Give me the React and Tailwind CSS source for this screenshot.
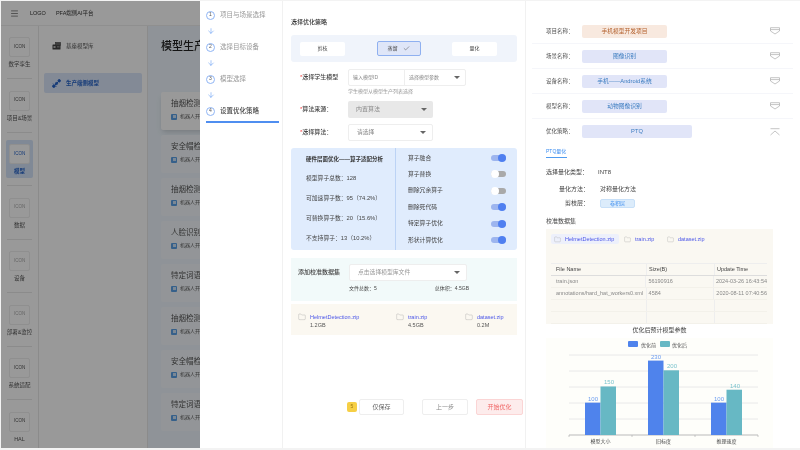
import { ArrowDown, Check, Folder, Menu } from "lucide-react";

const sideItems = [
  { label: "数字孪生" },
  { label: "项目&场景" },
  { label: "模型", active: true },
  { label: "数据", dim: true },
  { label: "设备", dim: true },
  { label: "部署&监控", dim: true },
  { label: "系统适配" },
  { label: "HAL" },
];

const cards = ["抽烟检测", "安全帽检", "抽烟检测", "人脸识别", "特定词语", "抽烟检测", "安全帽检", "特定词语"];
const steps = ["项目与场景选择", "选择目标设备", "模型选择", "设置优化策略"];
const toggles = [
  { label: "算子融合", on: true },
  { label: "算子替换", on: false },
  { label: "删除冗余算子", on: false },
  { label: "删除死代码", on: true },
  { label: "特定算子优化", on: true },
  { label: "形状计算优化", on: true },
];
const stats = ["模型算子总数：128", "可加速算子数：95（74.2%）", "可替换算子数：20（15.6%）", "不支持算子：13（10.2%）"];
const files = [
  { name: "HelmetDetection.zip", size: "1.2GB", cls: "w-[98px]" },
  { name: "train.zip", size: "4.5GB", cls: "w-[69px]" },
  { name: "dataset.zip", size: "0.2M", cls: "w-[50px]" },
];
const summary = [
  { label: "项目名称：", value: "手机模型开发项目", cls: "w-[85px] bg-[#f8e9df] text-[#b4622f]" },
  { label: "场景名称：", value: "图像识别", cls: "w-[85px] bg-[#e1e5f8] text-[#3b7cc0]" },
  { label: "设备名称：", value: "手机——Android系统", cls: "w-[85px] bg-[#e1e5f8] text-[#3b7cc0]" },
  { label: "模型名称：", value: "动物图像识别", cls: "w-[85px] bg-[#e1e5f8] text-[#3b7cc0]" },
  { label: "优化策略：", value: "PTQ", cls: "w-[110px] bg-[#e1e5f8] text-[#3b7cc0]", open: true },
];
const tableRows = [
  ["train.json", "56190916", "2024-03-26 16:43:54"],
  ["annotations/hard_hat_workers0.xml", "4584", "2020-08-11 07:40:56"],
  ["", "", ""],
  ["", "", ""],
];

function Toggle({ on }) {
  return (
    <div className={`relative w-[15px] h-[6px] rounded-full ${on ? "bg-[#9db5ef]" : "bg-[#a9a9a9]"}`}>
      <div className={`absolute top-[-1px] w-[8px] h-[8px] rounded-full ${on ? "right-0 bg-[#4f7ff0]" : "left-0 bg-white"}`} />
    </div>
  );
}

function FoldIcon({ open }) {
  return (
    <svg width="10" height="8" viewBox="0 0 10 8" fill="none" stroke="#b5b5b5" strokeWidth="0.8">
      {open ? (
        <>
          <path d="M0.5 0.7H9.5" />
          <path d="M0.5 7L5 3L9.5 7" />
        </>
      ) : (
        <>
          <path d="M0.5 0.7H9.5V4L5 7L0.5 4Z" />
          <path d="M0.5 2.6H9.5" />
        </>
      )}
    </svg>
  );
}

function LibraryIcon() {
  return (
    <svg width="9" height="8" viewBox="0 0 9 8" className="shrink-0">
      <rect x="0.5" y="2.5" width="8" height="5" rx="0.5" fill="#444" />
      <rect x="3.5" y="0.5" width="5" height="3" fill="#666" stroke="#444" strokeWidth="0.6" />
      <rect x="1.5" y="4" width="2" height="2" fill="#bbb" />
      <rect x="5" y="4.5" width="2.5" height="0.8" fill="#bbb" />
    </svg>
  );
}

function ChainIcon() {
  return (
    <svg width="9" height="9" viewBox="0 0 9 9" className="shrink-0" fill="none" stroke="#2563c9" strokeWidth="1">
      <path d="M2 7L7 2" />
      <path d="M1 4.5L4.5 8" strokeWidth="0.7" />
      <circle cx="1.8" cy="7.2" r="1.2" fill="#2563c9" />
      <circle cx="4.5" cy="4.5" r="1.1" fill="#2563c9" />
      <circle cx="7.2" cy="1.8" r="1.2" fill="#2563c9" />
    </svg>
  );
}

function Caret() {
  return <div className="w-0 h-0 border-x-[3px] border-x-transparent border-t-[3px] border-t-[#666]" />;
}

function Field({ label, children }) {
  return (
    <div className="flex items-center">
      <div className="w-[57px] pl-[9px] text-[6px] font-medium text-[#444] whitespace-nowrap">
        <span className="text-[#f04040]">*</span>
        {label}
      </div>
      {children}
    </div>
  );
}

function Chart() {
  const groups = [
    { name: "模型大小", x: 39, a: 100, b: 150 },
    { name: "旧标度", x: 102, a: 230, b: 200 },
    { name: "推理速度", x: 165, a: 100, b: 140 },
  ];
  const y = (v) => 97 - v * 0.3235;
  return (
    <svg width="227" height="110" viewBox="0 0 227 110" className="block">
      <rect x="82" y="3" width="10" height="6" rx="1" fill="#4f83ec" />
      <text x="95" y="8.5" fontSize="5" fill="#555">优化前</text>
      <rect x="114" y="3" width="10" height="6" rx="1" fill="#67b8c4" />
      <text x="126" y="8.5" fontSize="5" fill="#555">优化后</text>
      {[17, 33, 49, 65, 81].map((gy) => (
        <line key={gy} x1="23" x2="212" y1={gy} y2={gy} stroke="#e4e4e4" strokeWidth="0.8" />
      ))}
      <line x1="23" x2="212" y1="97" y2="97" stroke="#aaa" strokeWidth="0.8" />
      {[23, 86, 149, 212].map((tx) => (
        <line key={tx} x1={tx} x2={tx} y1="97" y2="99" stroke="#aaa" strokeWidth="0.6" />
      ))}
      {groups.map((g) => (
        <g key={g.name}>
          <rect x={g.x} y={y(g.a)} width="15.5" height={97 - y(g.a)} fill="#4f83ec" />
          <rect x={g.x + 15.5} y={y(g.b)} width="15.5" height={97 - y(g.b)} fill="#67b8c4" />
          <text x={g.x + 8} y={y(g.a) - 2} fontSize="6" textAnchor="middle" fill="#6a9bf0">{g.a}</text>
          <text x={g.x + 24} y={y(g.b) - 2} fontSize="6" textAnchor="middle" fill="#7cc4ce">{g.b}</text>
          <text x={g.x + 15.5} y="105" fontSize="5" textAnchor="middle" fill="#444">{g.name}</text>
        </g>
      ))}
    </svg>
  );
}

export default function App() {
  return (
    <div className="w-[800px] h-[450px] overflow-hidden flex bg-[#f3f3f3] pt-px pb-[2px] pl-px blur-[0.35px] font-['Liberation_Sans','Noto_Sans_CJK_SC',sans-serif]">
      {/* page behind the drawer */}
      <div className="relative w-[199px] h-full overflow-hidden bg-white flex flex-col">
        <div className="h-[25px] shrink-0 flex items-center pl-[9px] border-b border-[#eee]">
          <Menu size={9} strokeWidth={1.5} color="#333" />
          <span className="ml-[11px] text-[5.5px] text-[#333]">LOGO</span>
          <span className="ml-[10px] text-[5.5px] text-[#333]">PFA端侧AI平台</span>
        </div>
        <div className="flex-1 flex min-h-0">
          <div className="w-[38px] shrink-0 border-r border-[#e8e8e8] flex flex-col items-center pt-[7px]">
            {sideItems.map((item, i) => (
              <div key={item.label} className="w-full flex flex-col items-center">
                <div className={`w-[27px] h-[38px] rounded-[2px] flex flex-col items-center pt-[4px] ${item.active ? "bg-[#d5e4fa]" : ""}`}>
                  <div className={`w-[21px] h-[20px] shrink-0 rounded-[2px] border border-[#eee] bg-white flex items-center justify-center text-[4.5px] ${item.active ? "text-[#2563c9]" : item.dim ? "text-[#aaa]" : "text-[#555]"}`}>
                    ICON
                  </div>
                  <div className={`mt-[3px] text-[5.5px] leading-[8px] whitespace-nowrap ${item.active ? "text-[#2563c9] font-bold" : "text-[#555]"}`}>{item.label}</div>
                </div>
                {i < sideItems.length - 1 && <div className="w-[25px] h-px bg-[#e8e8e8] mt-[7px] mb-[7.5px]" />}
              </div>
            ))}
          </div>
          <div className="w-[109px] shrink-0 border-r border-[#e8e8e8] pl-[5px] pr-[5px] pt-[10px]">
            <div className="h-[20px] flex items-center pl-[8px] text-[5.5px] text-[#555] gap-[5px]">
              <LibraryIcon />
              基座模型库
            </div>
            <div className="mt-[17px] h-[20px] rounded-[2px] bg-[#dbe7fb] flex items-center pl-[8px] text-[5.5px] font-bold text-[#2563c9] gap-[5px]">
              <ChainIcon />
              生产端侧模型
            </div>
          </div>
          <div className="flex-1 bg-[#eef6fd] pl-[13px] pt-[12px] min-w-0 overflow-hidden">
            <div className="text-[11px] leading-[16px] font-medium text-[#222] whitespace-nowrap">模型生产</div>
            <div className="mt-[38px] flex flex-col gap-[5px] w-[160px]">
              {cards.map((title, i) => (
                <div key={i} className={`h-[38px] rounded-[2px] pl-[10px] pt-[6px] ${i === 0 ? "bg-white shadow-md" : "bg-[#f5f9fd]"}`}>
                  <div className="text-[7.5px] leading-[12px] text-[#555] whitespace-nowrap">{title}测模型</div>
                  <div className="mt-[3px] flex items-center gap-[3px] text-[5px] text-[#666] whitespace-nowrap">
                    <div className="w-[6px] h-[6px] rounded-[1px] bg-[#5aa0e6] flex items-center justify-center">
                      <div className="w-[3px] h-[3px] bg-white/70" />
                    </div>
                    机器人开发
                  </div>
                </div>
              ))}
            </div>
          </div>
        </div>
        <div className="absolute inset-0 bg-black/40" />
      </div>

      {/* drawer: steps */}
      <div className="w-[83px] shrink-0 bg-white border-r border-[#f1f1f1] pt-[7px] pl-[6px] pr-[3px]">
        {steps.map((s, i) => (
          <div key={s}>
            <div className={`h-[14px] flex items-center gap-[5px] text-[6.5px] whitespace-nowrap ${i === 3 ? "text-[#444] font-medium" : "text-[#999]"}`}>
              <div className="w-[9px] h-[9px] rounded-full border border-[#8fb5f5] flex items-center justify-center text-[5px] text-[#555]">{i + 1}</div>
              {s}
            </div>
            {i < 3 && (
              <div className="h-[18px] flex items-center pl-[1px]">
                <ArrowDown size={8} strokeWidth={1.5} color="#4f8ef0" />
              </div>
            )}
          </div>
        ))}
        <div className="mt-[3px] h-[1.5px] bg-[#4f8ef0]" />
      </div>

      {/* drawer: strategy form */}
      <div className="w-[243px] shrink-0 bg-white border-r border-[#f1f1f1] pl-[8px] pr-[8px] pt-[17px] flex flex-col">
        <div className="text-[6px] leading-[9px] font-medium text-[#333]">选择优化策略</div>
        <div className="mt-[8px] h-[27px] rounded-[3px] bg-[#f0f4fb] flex items-center pl-[9px] pr-[20px] justify-between text-[5px] text-[#444]">
          <div className="w-[45px] h-[14px] rounded-[2px] bg-white flex items-center justify-center">剪枝</div>
          <div className="w-[44px] h-[15px] rounded-[2px] bg-[#dfe6f8] border border-[#8fb0f0] flex items-center justify-center gap-[5px]">
            蒸馏
            <Check size={7} strokeWidth={1.5} color="#333" />
          </div>
          <div className="w-[45px] h-[14px] rounded-[2px] bg-white flex items-center justify-center">量化</div>
        </div>

        <div className="mt-[7px]">
          <Field label="选择学生模型">
            <div className="w-[118px] h-[17px] border border-[#eee] rounded-[2px] flex items-center text-[5px] text-[#888]">
              <div className="w-[56px] h-full border-r border-[#eee] pl-[4px] flex items-center">输入模型ID</div>
              <div className="flex-1 pl-[4px] pr-[5px] flex items-center justify-between">选择模型参数<Caret /></div>
            </div>
          </Field>
          <div className="ml-[57px] mt-[1px] text-[5px] leading-[8px] text-[#999]">学生模型从模型生产列表选择</div>
        </div>
        <div className="mt-[6px]">
          <Field label="算法来源：">
            <div className="w-[85px] h-[17px] rounded-[2px] bg-[#e8e8e8] pl-[8px] pr-[6px] flex items-center justify-between text-[6px] text-[#888]">内置算法<Caret /></div>
          </Field>
        </div>
        <div className="mt-[6px]">
          <Field label="选择算法：">
            <div className="w-[85px] h-[17px] rounded-[2px] border border-[#eee] pl-[8px] pr-[6px] flex items-center justify-between text-[5.8px] text-[#888]">请选择<Caret /></div>
          </Field>
        </div>

        <div className="mt-[7px] h-[102px] rounded-[3px] bg-[#e0ecfd] flex text-[5.8px] text-[#444]">
          <div className="w-[105px] border-r border-[#bcd3f5] pl-[15px] pt-[7px] flex flex-col">
            <div className="font-bold text-[5.5px] text-[#333] whitespace-nowrap leading-[8px]">硬件层面优化——算子适配分析</div>
            <div className="flex flex-col gap-[12px] mt-[11px]">
              {stats.map((s) => (
                <div key={s} className="leading-[8px] whitespace-nowrap">{s}</div>
              ))}
            </div>
          </div>
          <div className="flex-1 pl-[12px] pr-[11px] pt-[6px] flex flex-col gap-[8.4px]">
            {toggles.map((t) => (
              <div key={t.label} className="h-[8px] flex items-center justify-between">
                {t.label}
                <Toggle on={t.on} />
              </div>
            ))}
          </div>
        </div>

        <div className="mt-[8px] h-[43px] bg-[#f2fafa] pl-[7px] pt-[6px] text-[5.8px] text-[#444]">
          <div className="flex items-center gap-[9px]">
            <span className="text-[6px] font-medium whitespace-nowrap">添加校准数据集</span>
            <div className="w-[118px] h-[17px] bg-white border border-[#eee] rounded-[2px] pl-[8px] pr-[6px] flex items-center justify-between text-[#999]">点击选择模型库文件<Caret /></div>
          </div>
          <div className="mt-[2px] ml-[51px] w-[120px] flex justify-between text-[5px] leading-[10px]">
            <span>文件总数：5</span>
            <span>总体积：4.5GB</span>
          </div>
        </div>

        <div className="mt-[3px] h-[31px] bg-[#fbf8f1] pl-[7px] pt-[9px] flex">
          {files.map((f) => (
            <div key={f.name} className={`${f.cls} flex gap-[4px]`}>
              <Folder size={8} strokeWidth={1} color="#999" className="shrink-0" />
              <div className="text-[5.5px] leading-[8px]">
                <div className="text-[#4a55e8] whitespace-nowrap">{f.name}</div>
                <div className="text-[#555]">{f.size}</div>
              </div>
            </div>
          ))}
        </div>

        <div className="mt-[64px] flex items-center text-[6px] whitespace-nowrap">
          <div className="shrink-0 ml-[56px] w-[10px] h-[10px] rounded-[2px] bg-[#f6cf45] text-[#a07a10] flex items-center justify-center text-[5px]">5</div>
          <div className="shrink-0 ml-[2px] w-[45px] h-[16px] rounded-[2px] border border-[#eee] text-[#666] flex items-center justify-center">仅保存</div>
          <div className="shrink-0 ml-[18px] w-[46px] h-[16px] rounded-[2px] border border-[#eee] text-[#888] flex items-center justify-center">上一步</div>
          <div className="shrink-0 ml-[8px] w-[47px] h-[16px] rounded-[2px] border border-[#fbd5d5] bg-[#fdecec] text-[#f06a6a] flex items-center justify-center">开始优化</div>
        </div>
      </div>

      {/* drawer: summary */}
      <div className="flex-1 bg-white pl-[6px] pr-[7px] pt-[18px] min-w-0">
        {summary.map((row, i) => (
          <div key={row.label} className={`h-[25px] flex items-center pl-[14px] pr-[13px] ${i < 4 ? "border-b border-[#f5f6fa]" : ""}`}>
            <div className="w-[36px] text-[5.5px] text-[#555] whitespace-nowrap">{row.label}</div>
            <div className={`h-[13px] rounded-[2px] flex items-center justify-center text-[5.75px] ${row.cls}`}>{row.value}</div>
            <div className="ml-auto">
              <FoldIcon open={row.open} />
            </div>
          </div>
        ))}

        <div className="ml-[14px] mt-[3px] w-[21px] border-b border-[#4f9bf0] pb-[2px] text-[5px] leading-[8px] text-[#3d8ef0] whitespace-nowrap">PTQ量化</div>
        <div className="ml-[14px] mt-[10px] text-[6px] leading-[9px] text-[#444] flex">
          <span className="w-[52px]">选择量化类型：</span>
          <span>INT8</span>
        </div>
        <div className="ml-[27px] mt-[8px] text-[6px] leading-[9px] text-[#444] flex">
          <span className="w-[41px]">量化方法：</span>
          <span>对称量化方法</span>
        </div>
        <div className="ml-[33px] mt-[5px] text-[6px] text-[#444] flex items-center">
          <span className="w-[35px]">剪枝层：</span>
          <span className="w-[35px] h-[9px] rounded-[2px] bg-[#dcecfb] border border-[#c8e0f8] text-[#3d8ef0] text-[5px] flex items-center justify-center">卷积层</span>
        </div>
        <div className="ml-[14px] mt-[9px] text-[6px] leading-[9px] text-[#444]">校准数据集</div>

        <div className="ml-[14px] mt-[3px] w-[227px] h-[95px] bg-[#faf8f2] pl-[5px] pt-[5px]">
          <div className="flex items-center gap-[5px] text-[5.5px] text-[#4a55e8] whitespace-nowrap">
            <div className="w-[68px] h-[10px] rounded-[2px] bg-[#edf0fb] pl-[3px] flex items-center gap-[4px]">
              <Folder size={7} strokeWidth={1} color="#999" />
              HelmetDetection.zip
            </div>
            <div className="flex items-center gap-[4px] w-[38px]"><Folder size={7} strokeWidth={1} color="#999" />train.zip</div>
            <div className="flex items-center gap-[4px]"><Folder size={7} strokeWidth={1} color="#999" />dataset.zip</div>
          </div>
          <div className="mt-[19px] w-[216px] text-[5.5px] text-[#888]">
            <div className="h-[13px] flex items-center border-y border-[#eee] border-b-[#ddd] text-[#444]">
              <div className="w-[96px] pl-[5px] border-r border-[#eee] h-full flex items-center">File Name</div>
              <div className="w-[68px] pl-[2px] border-r border-[#eee] h-full flex items-center">Size(B)</div>
              <div className="pl-[2px]">Update Time</div>
            </div>
            {tableRows.map((r, i) => (
              <div key={i} className="h-[12px] flex items-center border-b border-[#f3f1ea] whitespace-nowrap">
                <div className="w-[96px] pl-[5px] border-r border-[#eee] h-full flex items-center">{r[0]}</div>
                <div className="w-[68px] pl-[2px] border-r border-[#eee] h-full flex items-center">{r[1]}</div>
                <div className="pl-[2px]">{r[2]}</div>
              </div>
            ))}
          </div>
        </div>

        <div className="ml-[14px] w-[227px] text-center text-[6px] leading-[12px] text-[#444]">优化后预计模型参数</div>
        <div className="ml-[14px] mt-[2px] w-[227px] h-[110px] bg-[#fefefa]">
          <Chart />
        </div>
      </div>
    </div>
  );
}
